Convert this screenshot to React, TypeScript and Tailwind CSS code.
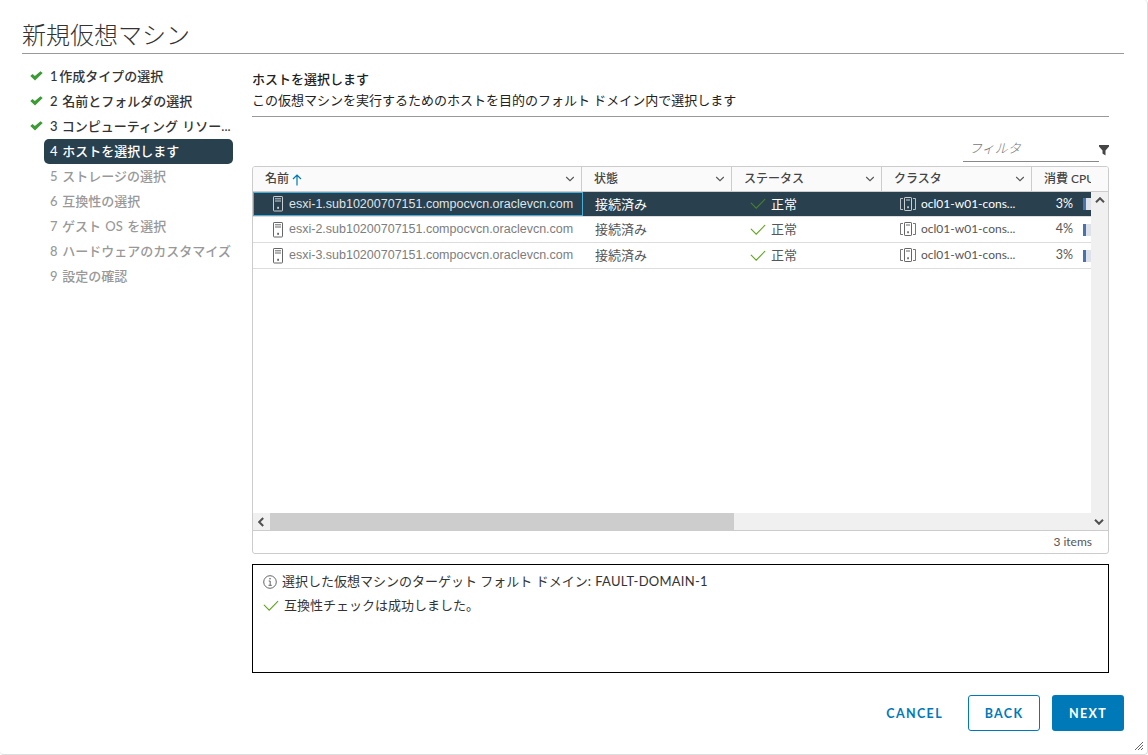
import type { ReactNode } from "react";

const steps = [
  { label: "1 作成タイプの選択", state: "done", spacing: "[word-spacing:-1.5px]" },
  { label: "2 名前とフォルダの選択", state: "done", spacing: "[word-spacing:1.5px]" },
  { label: "3 コンピューティング リソー...", state: "done", spacing: "[word-spacing:1px]" },
  { label: "4 ホストを選択します", state: "active", spacing: "[word-spacing:1.5px]" },
  { label: "5 ストレージの選択", state: "todo", spacing: "[word-spacing:1.5px]" },
  { label: "6 互換性の選択", state: "todo", spacing: "[word-spacing:1.5px]" },
  { label: "7 ゲスト OS を選択", state: "todo", spacing: "[word-spacing:1.1px]" },
  { label: "8 ハードウェアのカスタマイズ", state: "todo", spacing: "[word-spacing:1.5px]" },
  { label: "9 設定の確認", state: "todo", spacing: "[word-spacing:1.5px]" },
];

const stepStyle: Record<string, string> = {
  done: "text-[#333]",
  active: "bg-[#29404f] text-white",
  todo: "text-[#999]",
};

const hosts = [
  { name: "esxi-1.sub10200707151.compocvcn.oraclevcn.com", cpu: "3%", selected: true },
  { name: "esxi-2.sub10200707151.compocvcn.oraclevcn.com", cpu: "4%", selected: false },
  { name: "esxi-3.sub10200707151.compocvcn.oraclevcn.com", cpu: "3%", selected: false },
];

function BoldCheck() {
  return (
    <svg width="13" height="10" viewBox="0 0 13 10" className="shrink-0">
      <path d="M0.3 5 2.5 2.9 4.9 5.1 10.5 0.3 12.7 2.1 5 9.6Z" fill="#3d9b35" />
    </svg>
  );
}

function ThinCheck({ color }: { color: string }) {
  return (
    <svg width="16" height="12" viewBox="0 0 16 12" className="shrink-0" fill="none">
      <path d="M1.2 5.2 6.2 10.2 14.8 1.4" stroke={color} strokeWidth="1.1" strokeLinecap="round" />
    </svg>
  );
}

function Chevron() {
  return (
    <svg width="10" height="6" viewBox="0 0 10 6" className="shrink-0" fill="none">
      <path d="M1.2 1 5 4.7 8.8 1" stroke="#555" strokeWidth="1.1" />
    </svg>
  );
}

function HostIcon({ className }: { className: string }) {
  return (
    <svg width="10" height="16" viewBox="0 0 10 16" className={`shrink-0 ${className}`} fill="none" stroke="currentColor">
      <rect x="0.5" y="0.5" width="9" height="14.5" rx="0.6" />
      <path d="M2 2.8h6M2 5h6" />
      <rect x="4.2" y="10.8" width="1.8" height="2" fill="currentColor" stroke="none" />
    </svg>
  );
}

function ClusterIcon({ className }: { className: string }) {
  return (
    <svg width="16" height="14" viewBox="0 0 16 14" className={`shrink-0 ${className}`} fill="none" stroke="currentColor">
      <path d="M3 1.5H.5v11H3M13 1.5h2.5v11H13" strokeWidth="0.9" />
      <rect x="4.5" y="0.5" width="7" height="13" rx="0.6" />
      <path d="M6 3h4" />
      <rect x="7.2" y="9.3" width="1.7" height="1.9" fill="currentColor" stroke="none" />
    </svg>
  );
}

function HeaderCell({ className, children, menu = true }: { className: string; children: ReactNode; menu?: boolean }) {
  return (
    <div className={`flex h-full items-center whitespace-nowrap pl-3 font-medium ${className}`}>
      {children}
      {menu && <span className="ml-auto pr-[6px] pb-px"><Chevron /></span>}
    </div>
  );
}

export default function App() {
  return (
    <div className="relative flex h-[755px] w-[1148px] flex-col overflow-hidden rounded border-r border-b border-[#ddd] bg-white pl-[22px] font-[Lato,'Noto_Sans_CJK_JP',sans-serif] text-[13px] leading-[18px] text-[#333]">
      <header className="h-[54px] w-[1102px] shrink-0 border-b border-[#999] pt-[18px]">
        <h1 className="text-[24px] leading-[34px] font-light">新規仮想マシン</h1>
      </header>

      <div className="flex h-[619px]">
        <nav className="w-[230px] shrink-0 pt-[10px]">
          {steps.map((s) => (
            <div key={s.label} className="flex h-[25px] items-center pl-2">
              <span className="w-[14px] pb-[2px]">{s.state === "done" && <BoldCheck />}</span>
              <span className={`flex h-[25px] w-[189px] items-center rounded-[5px] pb-[2px] pl-[6px] font-medium whitespace-nowrap ${stepStyle[s.state]} ${s.spacing}`}>
                {s.label}
              </span>
            </div>
          ))}
        </nav>

        <main className="flex w-[857px] shrink-0 flex-col">
          <div className="h-[63px] shrink-0 border-b border-[#999] pt-[15px]">
            <h2 className="leading-[20px] font-medium text-[#222]">ホストを選択します</h2>
            <p className="leading-[22px] text-[#222]">この仮想マシンを実行するためのホストを目的のフォルト ドメイン内で選択します</p>
          </div>

          <div className="flex h-[49px] shrink-0 justify-end pt-[20px]">
            <div className="h-[25px] w-[136px] border-b border-[#888] pt-[2px] pl-[6px] font-light text-[#777] italic">フィルタ</div>
            <svg width="10" height="11" viewBox="0 0 10 11" className="mt-[8px]">
              <path d="M0 0h10v1.5L6.5 5.5V10.5L3.500 8.500v-3L0 1.500Z" fill="#454545" />
            </svg>
          </div>

          <section className="flex h-[388px] shrink-0 flex-col overflow-hidden rounded-[3px] border border-[#ccc]">
            <div className="flex h-[25px] shrink-0 border-b border-[#ccc] bg-[#fafafa] text-[12px] text-[#454545]">
              <HeaderCell className="w-[329px] border-r border-[#ccc]">
                名前
                <svg width="10" height="12" viewBox="0 0 10 12" className="mt-[2px] ml-[3px]" fill="none">
                  <path d="M5 11.5V1M1 5l4-4 4 4" stroke="#0079b8" strokeWidth="1.2" />
                </svg>
              </HeaderCell>
              <HeaderCell className="w-[150px] border-r border-[#ccc]">状態</HeaderCell>
              <HeaderCell className="w-[150px] border-r border-[#ccc]">ステータス</HeaderCell>
              <HeaderCell className="w-[150px] border-r border-[#ccc]">クラスタ</HeaderCell>
              <HeaderCell className="w-[59px]" menu={false}><span className="w-[47px] overflow-hidden">消費 CPU</span></HeaderCell>
            </div>
            <div className="flex h-[321px] shrink-0">
              <div className="w-[838px]">
                {hosts.map((h) => (
                  <div key={h.name} className={`flex items-center border-b border-[#ddd] whitespace-nowrap ${h.selected ? "h-[25px] bg-[#29404f] text-white" : "h-[26px] text-[#565656]"}`}>
                    <div className={`flex h-full w-[330px] items-center border pl-[19px] ${h.selected ? "border-[#49afd9]" : "border-transparent text-[#7d7d7d]"}`}>
                      <HostIcon className={h.selected ? "text-[#c9d0d4]" : "text-[#666]"} />
                      <span className={`ml-[6px] pb-px font-['Liberation_Sans',sans-serif] text-[12.5px] ${h.selected ? "text-[#dfe4e7]" : ""}`}>{h.name}</span>
                    </div>
                    <div className="w-[149px] pb-px pl-3">接続済み</div>
                    <div className="flex w-[150px] items-center gap-[5px] pl-[18px]">
                      <ThinCheck color={h.selected ? "#48802c" : "#62a420"} />
                      <span className="pb-px">正常</span>
                    </div>
                    <div className="flex w-[150px] items-center gap-[5px] pb-px pl-[18px]">
                      <ClusterIcon className={h.selected ? "text-[#c9d0d4]" : "text-[#666]"} />
                      <span className="text-[12px]">ocl01-w01-cons...</span>
                    </div>
                    <div className="flex w-[59px] items-center justify-end overflow-hidden">
                      <span className="mr-[10px] pb-px text-[12.5px]">{h.cpu}</span>
                      <span className="h-[12px] w-[8px] border-l-[3px] border-[#4a73ad] bg-[#dde1e8]" />
                    </div>
                  </div>
                ))}
              </div>
              <div className="flex w-[17px] justify-center bg-[#f0f0f0] pt-[5px]">
                <svg width="10" height="6" viewBox="0 0 10 6" fill="none">
                  <path d="M1 5.2 5 1.2 9 5.2" stroke="#505050" strokeWidth="2" />
                </svg>
              </div>
            </div>
            <div className="flex h-[17px] shrink-0 items-center bg-[#f0f0f0]">
              <span className="flex w-[16px] justify-center">
                <svg width="6" height="10" viewBox="0 0 6 10" fill="none">
                  <path d="M5.2 1 1.2 5l4 4" stroke="#505050" strokeWidth="2" />
                </svg>
              </span>
              <span className="ml-px h-[17px] w-[464px] bg-[#cdcdcd]" />
              <svg width="10" height="6" viewBox="0 0 10 6" className="mr-[4px] ml-auto" fill="none">
                <path d="M1 0.8 5 4.8 9 0.8" stroke="#505050" strokeWidth="2" />
              </svg>
            </div>
            <div className="flex h-[23px] items-center justify-end border-t border-[#ccc] pr-[16px] text-[12px] text-[#565656]">3 items</div>
          </section>

          <section className="mt-[10px] h-[109px] shrink-0 border border-black pt-[7px] pl-[10px] text-[#333]">
            <div className="flex h-[18px] items-center gap-[5px]">
              <svg width="14" height="14" viewBox="0 0 14 14" className="mt-[2px]" fill="none">
                <circle cx="7" cy="7" r="6.3" stroke="#565656" strokeWidth="0.9" />
                <path d="M5.7 6h1.5v4.3M5.5 10.3h3.3" stroke="#565656" strokeWidth="0.9" />
                <circle cx="7" cy="3.8" r="0.8" fill="#565656" />
              </svg>
              <span>選択した仮想マシンのターゲット フォルト ドメイン: <span className="ml-px tracking-[0.25px]">FAULT-DOMAIN-1</span></span>
            </div>
            <div className="mt-[6px] flex h-[18px] items-center gap-[5px]">
              <span className="mt-[2px]"><ThinCheck color="#62a420" /></span>
              <span>互換性チェックは成功しました。</span>
            </div>
          </section>
        </main>
      </div>

      <footer className="mt-[22px] flex h-[36px] w-[1102px] items-center justify-end text-[12.5px] font-bold tracking-[1.35px] text-[#0079b8]">
        <button className="mr-[25px] pt-[2px]">CANCEL</button>
        <button className="mr-3 h-[36px] w-[72px] rounded-[3px] border border-[#0079b8] pt-[2px]">BACK</button>
        <button className="h-[36px] w-[72px] rounded-[3px] bg-[#0079b8] pt-[2px] text-white">NEXT</button>
      </footer>
      <svg width="8" height="8" viewBox="0 0 8 8" className="absolute right-[4px] bottom-[4px]" fill="none">
        <path d="M0 8 8 0M3 8l5-5M6 8l2-2" stroke="#555" strokeWidth="0.9" />
      </svg>
    </div>
  );
}
